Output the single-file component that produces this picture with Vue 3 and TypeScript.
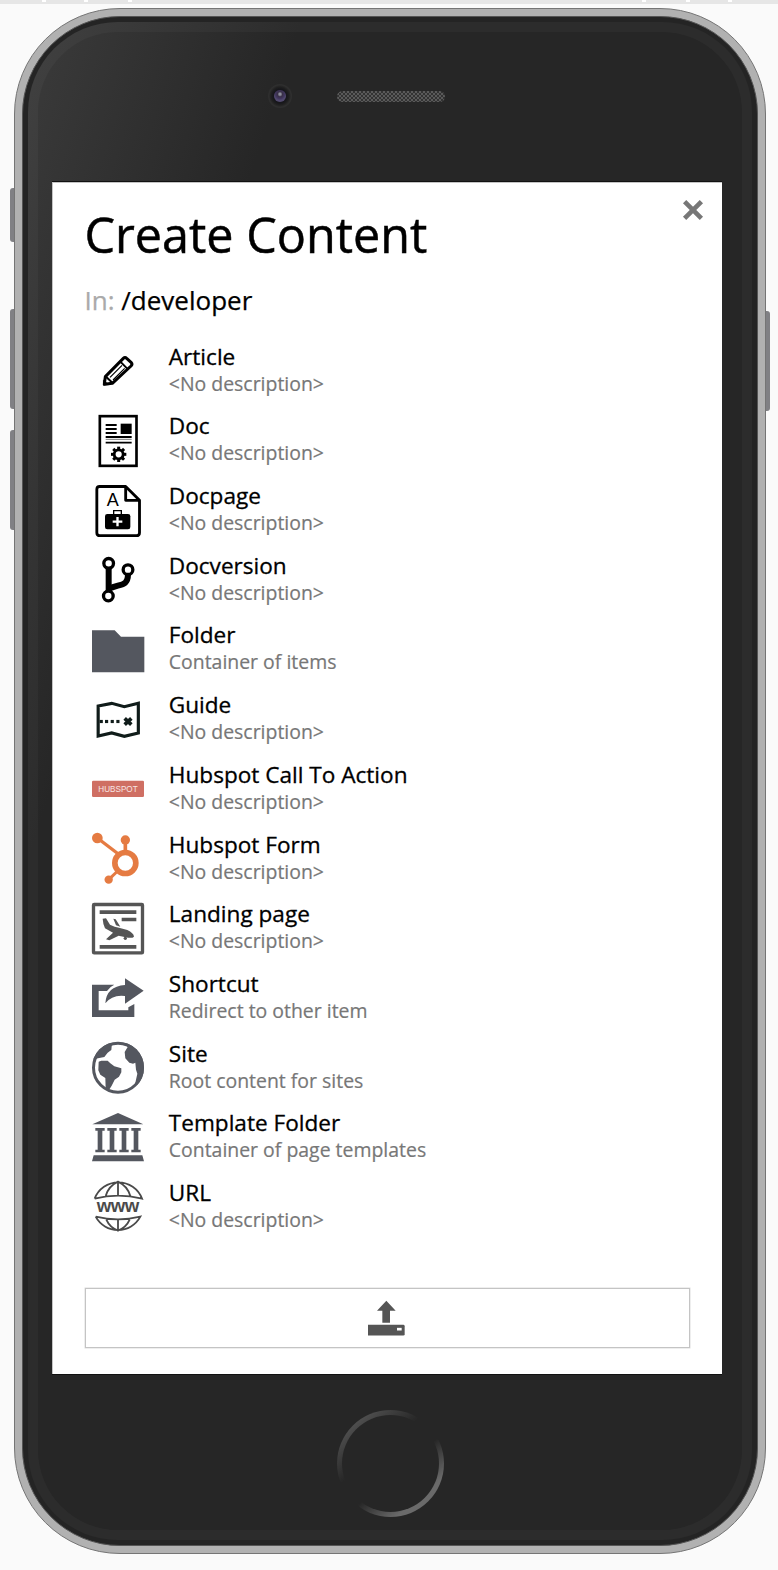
<script setup lang="ts">
type IconName =
  | 'article' | 'doc' | 'docpage' | 'docversion' | 'folder' | 'guide' | 'cta'
  | 'form' | 'landing' | 'shortcut' | 'site' | 'template' | 'url'

interface ContentType {
  name: string
  description: string
  icon: IconName
  viewBox: string
}

const NONE = '<No description>'

const contentTypes: ContentType[] = [
  { name: 'Article', description: NONE, icon: 'article', viewBox: '37 16 156 156' },
  { name: 'Doc', description: NONE, icon: 'doc', viewBox: '37 225 156 156' },
  { name: 'Docpage', description: NONE, icon: 'docpage', viewBox: '37 434 156 156' },
  { name: 'Docversion', description: NONE, icon: 'docversion', viewBox: '37 644 156 156' },
  { name: 'Folder', description: 'Container of items', icon: 'folder', viewBox: '37 43 156 156' },
  { name: 'Guide', description: NONE, icon: 'guide', viewBox: '37 252 156 156' },
  { name: 'Hubspot Call To Action', description: NONE, icon: 'cta', viewBox: '37 461 156 156' },
  { name: 'Hubspot Form', description: NONE, icon: 'form', viewBox: '37 671 156 156' },
  { name: 'Landing page', description: NONE, icon: 'landing', viewBox: '37 40 156 156' },
  { name: 'Shortcut', description: 'Redirect to other item', icon: 'shortcut', viewBox: '37 249 156 156' },
  { name: 'Site', description: 'Root content for sites', icon: 'site', viewBox: '37 458 156 156' },
  { name: 'Template Folder', description: 'Container of page templates', icon: 'template', viewBox: '37 668 156 156' },
  { name: 'URL', description: NONE, icon: 'url', viewBox: '37 877 156 156' },
]

const gearAngles = [0, 45, 90, 135, 180, 225, 270, 315]
const pillars = [61, 97, 133, 169]
const trailDots = [60, 76, 93, 110]
const ticks = [42, 84, 128, 642, 686, 728]
</script>

<template>
  <div class="stage">
    <div class="strip">
      <i v-for="t in ticks" :key="t" class="tick" :style="{ left: t + 'px' }"></i>
    </div>
    <span class="key key-mute"></span>
    <span class="key key-up"></span>
    <span class="key key-down"></span>
    <span class="key key-power"></span>

    <div class="phone">
      <div class="body">
        <div class="face">
          <div class="sensors">
            <span class="camera"><span class="lens"></span></span>
            <span class="speaker"></span>
          </div>

          <main class="screen">
            <svg class="close" viewBox="0 0 22 22">
              <path d="M2.6 2.6 L19.4 19.4 M19.4 2.6 L2.6 19.4" stroke="#777" stroke-width="4.6" fill="none" />
            </svg>
            <h1>Create Content</h1>
            <p class="path"><span>In:</span> /developer</p>

            <ul class="types">
              <li v-for="t in contentTypes" :key="t.name">
                <svg class="icon" :viewBox="t.viewBox">
                  <g v-if="t.icon === 'article'" fill="none" stroke="#000">
                    <path d="M74 134 L77 111 L131 56 Q136 51 141 56 L155 69 Q159 74 154 79 L98 131 Z" stroke-width="9" stroke-linejoin="round" />
                    <path d="M79 111 L99 130 M122 66 L145 89" stroke-width="6" />
                    <path d="M91 113 L127 77 M100 121 L135 86" stroke-width="3.500" />
                    <path d="M71 137 V121 L88 135 Z" fill="#000" stroke-width="1" />
                  </g>
                  <g v-else-if="t.icon === 'doc'">
                    <rect x="60.500" y="228.500" width="110" height="149" fill="none" stroke="#000" stroke-width="8" />
                    <path d="M78 255H111M78 267H111M78 279H111M78 291H156M78 308H156" stroke="#000" stroke-width="5.500" />
                    <path d="M78 298H156" stroke="#777" stroke-width="3" />
                    <rect x="123" y="251" width="33" height="31" />
                    <circle cx="117" cy="343" r="13.500" fill="none" stroke="#000" stroke-width="8.500" />
                    <rect v-for="a in gearAngles" :key="a" x="112.500" y="320" width="9" height="8" :transform="`rotate(${a} 117 343)`" />
                  </g>
                  <g v-else-if="t.icon === 'docpage'">
                    <path d="M60 438.500H138L179.500 480V577Q179.500 586 170 586H61Q51.500 586 51.500 577V447Q51.500 438.500 60 438.500Z M138 439V480H179" fill="none" stroke="#000" stroke-width="8.500" stroke-linejoin="round" />
                    <text x="99" y="497" font-size="54" text-anchor="middle" class="glyph">A</text>
                    <rect x="76" y="521" width="76" height="46" rx="7" />
                    <path d="M102 522V511H125V522" fill="none" stroke="#000" stroke-width="4" />
                    <path d="M113.500 530V558M99 544H128" stroke="#fff" stroke-width="7" />
                  </g>
                  <g v-else-if="t.icon === 'docversion'" fill="none" stroke="#000">
                    <path d="M87 686V756" stroke-width="18" />
                    <path d="M145 705C145 742 120 733 89 748" stroke-width="18" />
                    <circle cx="87" cy="672" r="14.500" stroke-width="10" />
                    <circle cx="145" cy="691" r="14.500" stroke-width="10" />
                    <circle cx="86" cy="770" r="14.500" stroke-width="10" />
                  </g>
                  <path v-else-if="t.icon === 'folder'" d="M37 62H105L124 81H194V188H37Z" fill="#54575f" />
                  <g v-else-if="t.icon === 'guide'" fill="none" stroke="#101c1a">
                    <path d="M55.500 288L96 280L134 290L176 280V369L134 379L96 369L55.500 378Z" stroke-width="9.500" />
                    <path v-for="x in trailDots" :key="x" :d="`M${x} 334.500h9.500`" stroke-width="9.500" />
                    <path d="M135 325L155 344M155 325L135 344" stroke-width="11" />
                  </g>
                  <g v-else-if="t.icon === 'cta'">
                    <rect x="37" y="514" width="156" height="49" rx="4" fill="#cf6f63" />
                    <text x="115" y="547" font-size="25" text-anchor="middle" textLength="118" lengthAdjust="spacingAndGlyphs" fill="#f8e6e3" class="glyph">HUBSPOT</text>
                  </g>
                  <g v-else-if="t.icon === 'form'" fill="#e57b42" stroke="#e57b42">
                    <circle cx="137" cy="761" r="31.500" fill="none" stroke-width="17" />
                    <path d="M53 686L116 734" stroke-width="10" />
                    <path d="M137 692V724" stroke-width="11" />
                    <path d="M87 811L114 785" stroke-width="9" />
                    <circle cx="53" cy="686" r="16" stroke="none" />
                    <circle cx="137" cy="692" r="14" stroke="none" />
                    <circle cx="87" cy="811" r="12.500" stroke="none" />
                  </g>
                  <g v-else-if="t.icon === 'landing'" fill="#555">
                    <rect x="41.500" y="44.500" width="147" height="145" rx="2" fill="none" stroke="#555" stroke-width="10" />
                    <path d="M60 62H170V73H60ZM126 84H170V95H126ZM60 166H170V177H60Z" />
                    <path d="M69 87L79 86L91 105L105 111L118 114L143 121Q162 130 163 141Q158 146 145 144L117 138L89 152L79 149L100 129L76 116Q70 104 69 87Z" />
                    <path d="M101 87L108 89L122 111L109 107Z" />
                    <circle cx="137" cy="146" r="5" />
                  </g>
                  <g v-else-if="t.icon === 'shortcut'" fill="#54575f">
                    <path d="M104 287H37V384H164V345L146 355V364H57V306H82Q90 293 104 287Z" />
                    <path d="M136 268L192 305L136 344V321Q98 316 77 343Q80 292 136 288Z" />
                  </g>
                  <g v-else-if="t.icon === 'site'" fill="#54575f">
                    <clipPath id="globe"><circle cx="115" cy="535" r="78" /></clipPath>
                    <circle cx="115" cy="535" r="73.500" fill="none" stroke="#54575f" stroke-width="9" />
                    <g clip-path="url(#globe)">
                      <path d="M36 512L55 507L74 503L84 490L95 482L97 462L80 455L40 480Z" />
                      <path d="M57 517L65 514H84L92 522L104 531L125 537V549L118 562L105 571L96 589L88 602L78 598L77 566L62 556L56 543Z" />
                      <path d="M136 462L144 473L135 488L137 507L149 520L160 523L167 520L169 541L173 553L167 580L176 590L200 560V470L160 450Z" />
                    </g>
                  </g>
                  <g v-else-if="t.icon === 'template'" fill="#54575f">
                    <path d="M38 705L115 671L191 705ZM42 798H188L193 816H37Z" />
                    <path v-for="x in pillars" :key="x" :d="`M${x - 14} 716h28v8h-7v57h7v8h-28v-8h7v-57h-7z`" />
                  </g>
                  <g v-else fill="none" stroke="#4a4a4a" stroke-width="5.500">
                    <path d="M45 930A76 76 0 0 1 187 930Q115 912 45 930M78 922Q87 892 115 879Q143 892 152 922M115 879V921" />
                    <path d="M48 984Q115 1000 182 984A76 76 0 0 1 48 984M80 993Q90 1016 115 1026Q140 1016 150 993M115 992V1026" />
                    <text x="115" y="970" font-size="56" font-weight="700" text-anchor="middle" textLength="128" fill="#4a4a4a" stroke="none" class="glyph">www</text>
                  </g>
                </svg>
                <div class="label">
                  <strong>{{ t.name }}</strong>
                  <span>{{ t.description }}</span>
                </div>
              </li>
            </ul>

            <button class="upload" type="button" aria-label="Upload">
              <svg viewBox="204 94 111 110">
                <path d="M259 96L287 126H270V162H247V126H231Z" fill="#555" />
                <path d="M204 168H310Q314 168 314 172V196Q314 200 310 200H204Z" fill="#555" />
                <rect x="291" y="177" width="14" height="8" fill="#fff" />
              </svg>
            </button>
          </main>

          <span class="home"></span>
        </div>
      </div>
    </div>
  </div>
</template>

<style>
body {
  background: #fafafa;
}
</style>

<style scoped>
* {
  box-sizing: border-box;
}
.stage {
  position: relative;
  width: 778px;
  height: 1570px;
  padding: 8px 12px 0 14px;
  overflow: hidden;
  background: #fafafa;
  font-family: 'Open Sans', 'Noto Sans', sans-serif;
}
.strip {
  position: absolute;
  inset: 0 0 auto;
  height: 4px;
  background: #e6e6e6;
}
.tick {
  position: absolute;
  top: 0;
  width: 4px;
  height: 2px;
  background: #fff;
}
.key {
  position: absolute;
  width: 6px;
  background: #808084;
}
.key-mute, .key-up, .key-down {
  left: 10px;
  border-radius: 3px 0 0 3px;
}
.key-mute { top: 188px; height: 54px; }
.key-up { top: 309px; height: 100px; }
.key-down { top: 430px; height: 100px; }
.key-power {
  left: 764px;
  top: 311px;
  height: 100px;
  border-radius: 0 3px 3px 0;
}
.phone {
  position: relative;
  width: 752px;
  height: 1546px;
  padding: 7px;
  border: 1px solid #757575;
  border-radius: 106px;
  background: #b1b1b1;
}
.body {
  width: 100%;
  height: 100%;
  border: 1px solid #555;
  border-radius: 98px;
  background: #242424;
  padding: 5px;
}
.face {
  display: flex;
  flex-direction: column;
  align-items: flex-start;
  width: 100%;
  height: 100%;
  padding: 0 14px;
  border: 10px solid rgba(255, 255, 255, 0.03);
  border-radius: 90px;
  background: linear-gradient(108deg, #3b3b3b 0, #262626 260px) border-box;
}
.sensors {
  display: flex;
  align-items: center;
  flex: none;
  height: 150px;
  padding: 0 0 22px 216px;
}
.camera {
  display: grid;
  place-items: center;
  width: 24px;
  height: 24px;
  border-radius: 50%;
  background: radial-gradient(circle, #17171b 0 7px, #202020 9px, #2e2e2e 11px);
}
.lens {
  width: 12px;
  height: 12px;
  border-radius: 50%;
  background: radial-gradient(circle at 50% 35%, #8b8b98 0 1px, #393047 2.5px, #41365f 4.5px, #51496e 6px);
}
.speaker {
  width: 108px;
  height: 11px;
  margin: 1px 0 0 45px;
  border-radius: 6px;
  background: conic-gradient(#5a5a5a 25%, #333 0 50%, #5a5a5a 0 75%, #333 0) 0 0 / 4px 4px;
}
.screen {
  position: relative;
  flex: none;
  width: 670px;
  height: 1192px;
  padding: 22px 32px 0;
  background: #fff;
  box-shadow: inset 1px 1px #c4c4c4, 0 -1px #111, 0 1px #111;
}
.close {
  position: absolute;
  top: 17px;
  right: 18px;
  width: 22px;
  height: 22px;
}
h1 {
  margin: 0 0 0 0.5px;
  font-size: 48.5px;
  font-weight: 400;
  line-height: 60px;
  -webkit-text-stroke: 0.5px #000;
}
.path {
  margin: 20px 0 0 0.5px;
  font-size: 26px;
  line-height: 32px;
  -webkit-text-stroke: 0.25px;
}
.path span {
  color: #aaa;
}
.types {
  margin: 20.4px 0 0;
  padding: 0;
  list-style: none;
}
li {
  display: flex;
  align-items: center;
  height: 69.7px;
  padding-left: 8.3px;
}
.icon {
  flex: none;
  width: 52px;
  height: 52px;
  overflow: visible;
}
.glyph {
  font-family: 'Liberation Sans', Arial, sans-serif;
}
.label {
  display: flex;
  flex-direction: column;
  margin: 0 0 3px 24.5px;
  line-height: 27px;
  white-space: nowrap;
}
.label strong {
  font-size: 22.6px;
  font-weight: 400;
  -webkit-text-stroke: 0.3px #000;
}
.label span {
  font-size: 19.45px;
  color: #777;
  -webkit-text-stroke: 0.2px #777;
}
.upload {
  display: flex;
  align-items: center;
  justify-content: center;
  width: 605px;
  height: 60px;
  margin: 45.6px 0 0 0.5px;
  padding: 2px 2px 0 0;
  border: 1px solid #c4c4c4;
  box-shadow: 0 0 0 0.5px #dedede;
  background: #fff;
}
.upload svg {
  width: 37px;
  height: 37px;
}
.home {
  flex: none;
  width: 107px;
  height: 107px;
  margin: 36px 0 0 284.5px;
  border: 5px solid transparent;
  border-radius: 50%;
  background:
    linear-gradient(#262626, #262626) padding-box,
    linear-gradient(140deg, #4e4e4e 22px, #262626 59px, #262626 86px, #6a6a6a 120px) border-box;
}
</style>
